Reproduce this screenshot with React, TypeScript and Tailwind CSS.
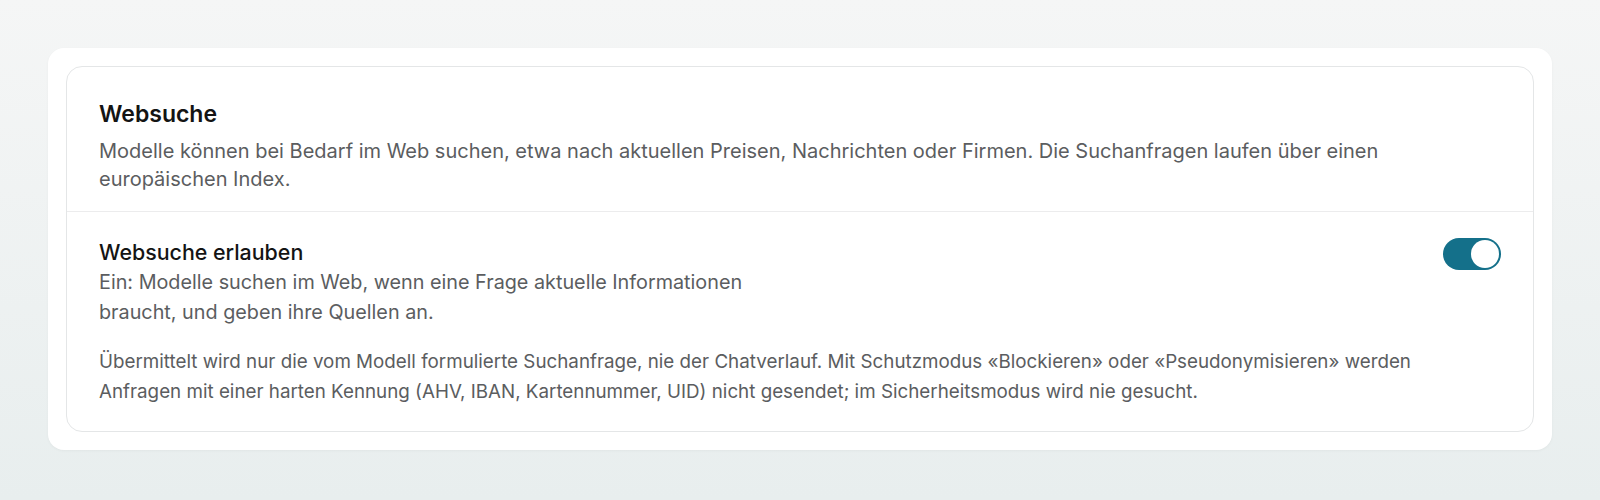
import { useState } from "react";

function Toggle({ on, onChange }: { on: boolean; onChange: (v: boolean) => void }) {
  return (
    <button
      type="button"
      role="switch"
      aria-checked={on}
      onClick={() => onChange(!on)}
      className={`relative inline-flex h-[32px] w-[58px] shrink-0 items-center rounded-full p-[2px] transition-colors ${on ? "bg-[#14708a]" : "bg-gray-300"}`}
    >
      <span className={`h-[28px] w-[28px] rounded-full bg-white transition-transform ${on ? "translate-x-[26px]" : "translate-x-0"}`} />
    </button>
  );
}

export default function App() {
  const [enabled, setEnabled] = useState(true);

  return (
    <div className="min-h-[500px] bg-gradient-to-b from-[#f5f6f6] to-[#e8eeee] p-12 font-['Inter',sans-serif]">
      <div className="rounded-2xl bg-white p-[18px] shadow-[0_1px_3px_rgba(0,0,0,0.04)]">
        <section className="rounded-2xl border border-[#e4e6e7]">
          <div className="px-8 pt-8 pb-[18px]">
            <h2 className="text-[23px] leading-[30px] font-semibold text-[#141414]">Websuche</h2>
            <p className="mt-2 max-w-[1290px] text-[20px] leading-7 text-[#5b5d60]">
              Modelle können bei Bedarf im Web suchen, etwa nach aktuellen Preisen, Nachrichten oder Firmen. Die Suchanfragen laufen über einen europäischen Index.
            </p>
          </div>

          <div className="border-t border-[#ececed] px-8 pt-[26px] pb-6">
            <div className="flex items-start justify-between gap-6">
              <div>
                <h3 className="text-[21.4px] leading-7 font-medium text-[#141414]">Websuche erlauben</h3>
                <p className="mt-px max-w-2xl text-[19.8px] leading-[30px] text-[#5b5d60]">
                  Ein: Modelle suchen im Web, wenn eine Frage aktuelle Informationen braucht, und geben ihre Quellen an.
                </p>
              </div>
              <Toggle on={enabled} onChange={setEnabled} />
            </div>
            <p className="mt-5 max-w-[1330px] text-[18.8px] leading-[30px] text-[#5b5d60]">
              Übermittelt wird nur die vom Modell formulierte Suchanfrage, nie der Chatverlauf. Mit Schutzmodus «Blockieren» oder «Pseudonymisieren» werden Anfragen mit einer harten Kennung (AHV, IBAN, Kartennummer, UID) nicht gesendet; im Sicherheitsmodus wird nie gesucht.
            </p>
          </div>
        </section>
      </div>
    </div>
  );
}
